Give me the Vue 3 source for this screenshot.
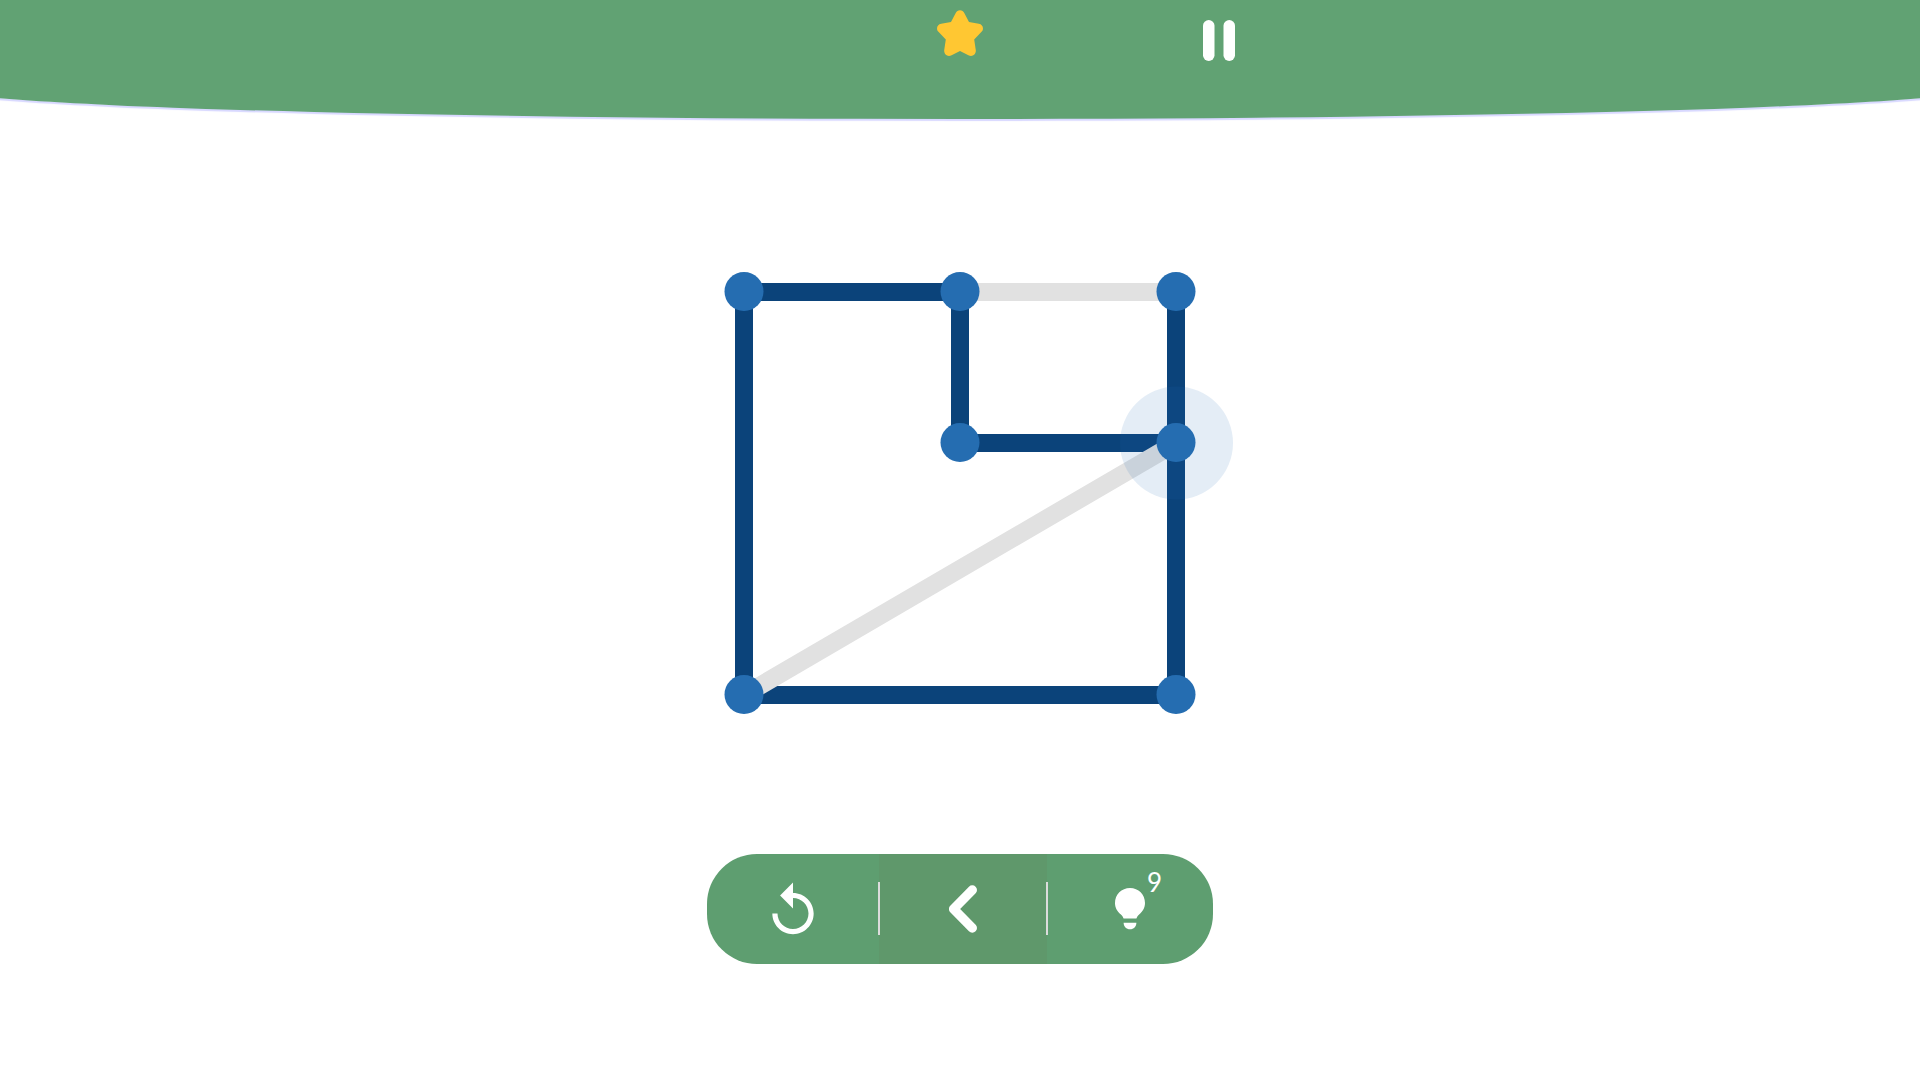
<script setup>
import { ref } from 'vue'

const hints = ref(9)

const xs = [72, 288, 504]
const ys = [40, 191, 443]

// Each edge joins two [column, row] grid positions, in painting order.
const edges = [
  { from: [0, 0], to: [1, 0], done: true },
  { from: [1, 0], to: [2, 0], done: false },
  { from: [1, 1], to: [2, 1], done: true },
  { from: [0, 2], to: [2, 2], done: true },
  { from: [0, 2], to: [2, 1], done: false },
  { from: [0, 0], to: [0, 2], done: true },
  { from: [1, 0], to: [1, 1], done: true },
  { from: [2, 0], to: [2, 2], done: true }
]

const nodes = [[0, 0], [1, 0], [2, 0], [1, 1], [2, 1], [0, 2], [2, 2]]
const current = [2, 1]
</script>

<template>
  <div class="game">
    <header class="header">
      <div class="header-inner">
        <svg class="star" viewBox="0 0 46 46" aria-hidden="true">
          <path d="M18.6 3.2 C20.2 -.9 25.8 -.9 27.4 3.2 L32 12 L41.8 13.8 C46 14.5 47.4 19.2 44.3 22 L37.2 29.4 L38.8 40.2 C39.2 44.6 35.2 47.3 31.4 45.3 L23 41 L14.6 45.3 C10.8 47.3 6.8 44.6 7.2 40.2 L8.8 29.4 L1.7 22 C-1.4 19.2 0 14.5 4.2 13.8 L14 12 Z" />
        </svg>
        <button class="pause" type="button" aria-label="Pause">
          <svg viewBox="0 0 32 41" aria-hidden="true">
            <rect x="0" y="0" width="11.5" height="41" rx="5.75" />
            <rect x="20.5" y="0" width="11.5" height="41" rx="5.75" />
          </svg>
        </button>
      </div>
    </header>

    <main class="stage">
      <svg class="board" viewBox="0 0 576 483" role="img" aria-label="One line puzzle">
        <line
          v-for="(edge, i) in edges"
          :key="i"
          :class="['edge', { done: edge.done }]"
          :x1="xs[edge.from[0]]"
          :y1="ys[edge.from[1]]"
          :x2="xs[edge.to[0]]"
          :y2="ys[edge.to[1]]"
        />
        <circle class="halo" :cx="xs[current[0]] + 0.5" :cy="ys[current[1]]" r="56.5" />
        <circle
          v-for="(node, i) in nodes"
          :key="i"
          class="node"
          :cx="xs[node[0]]"
          :cy="ys[node[1]] - 0.5"
          r="19.5"
        />
      </svg>

      <nav class="toolbar" aria-label="Game controls">
        <button class="tool restart" type="button" aria-label="Restart">
          <svg viewBox="0 0 24 24" aria-hidden="true">
            <path d="M12 5V1L7 6l5 5V7c3.31 0 6 2.69 6 6s-2.69 6-6 6-6-2.69-6-6H4c0 4.42 3.58 8 8 8s8-3.58 8-8-3.58-8-8-8z" />
          </svg>
        </button>
        <button class="tool undo" type="button" aria-label="Undo">
          <svg viewBox="0 0 28 48" aria-hidden="true">
            <path d="M23.3 5 L4.6 24 L23.3 43" />
          </svg>
        </button>
        <button class="tool hint" type="button" aria-label="Hint">
          <svg viewBox="0 0 30 42" aria-hidden="true">
            <path d="M15 0 C6.5 0 0 6.6 0 15 C0 20 2.4 23.4 5.6 26.3 C7.2 27.8 8 29 8.6 30.6 H21.4 C22 29 22.8 27.8 24.4 26.3 C27.6 23.4 30 20 30 15 C30 6.6 23.5 0 15 0 Z" />
            <path d="M8.6 34.7 H21.4 C21.2 38.6 18.8 41.2 15 41.2 C11.2 41.2 8.8 38.6 8.6 34.7 Z" />
          </svg>
          <span class="count">{{ hints }}</span>
        </button>
      </nav>
    </main>
  </div>
</template>

<style>
body {
  margin: 0;
  background: #fff;
}
</style>

<style scoped>
.game {
  min-height: 100vh;
  overflow: hidden;
  font-family: Lato, "Open Sans", sans-serif;
}

button {
  margin: 0;
  padding: 0;
  border: 0;
  background: none;
  font: inherit;
  color: #fff;
  cursor: pointer;
}

svg {
  display: block;
}

.header {
  position: relative;
  height: 119px;
}

.header::before {
  content: "";
  position: absolute;
  inset: 0 -3%;
  background: #61a273;
  border-radius: 0 0 50% 50% / 0 0 31px 31px;
  box-shadow: 0 2px 1px #d8d8ff;
}

.header-inner {
  position: relative;
  display: grid;
  grid-template-columns: 1fr auto 1fr;
  align-items: start;
  max-width: 550px;
  margin: 0 auto;
  padding-top: 10px;
}

.star {
  grid-column: 2;
  width: 46px;
  height: 46px;
  fill: #ffc732;
}

.pause {
  justify-self: end;
  padding-top: 10px;
}

.pause svg {
  width: 32px;
  height: 41px;
  fill: #fff;
}

.stage {
  display: flex;
  flex-direction: column;
  align-items: center;
  gap: 119px;
  padding-top: 133px;
}

.board {
  width: 100%;
  max-width: 576px;
}

.edge {
  stroke: #e1e1e1;
  stroke-width: 18px;
}

.edge.done {
  stroke: #0b437a;
}

.halo {
  fill: #2569b1;
  fill-opacity: 0.12;
}

.node {
  fill: #256db1;
}

.toolbar {
  display: grid;
  grid-template-columns: 172px 168px 166px;
  height: 110px;
  border-radius: 50px;
  overflow: hidden;
}

.tool {
  position: relative;
  display: flex;
  align-items: center;
  justify-content: center;
  background: #5e9e70;
}

.restart svg {
  width: 62px;
  height: 62px;
  margin-top: 4px;
  fill: #fff;
}

.undo {
  z-index: 1;
  background: #5f986b;
}

.undo::before,
.undo::after {
  content: "";
  position: absolute;
  top: 28px;
  width: 2px;
  height: 53px;
  background: #dcdcdc;
}

.undo::before {
  left: -1px;
}

.undo::after {
  right: -1px;
}

.undo svg {
  width: 28px;
  height: 48px;
  fill: none;
  stroke: #fff;
  stroke-width: 9.4px;
  stroke-linecap: round;
  stroke-linejoin: round;
}

.hint svg {
  width: 30px;
  height: 42px;
  fill: #fff;
}

.count {
  position: absolute;
  top: 12px;
  left: 100px;
  font-size: 26px;
  line-height: 32px;
}
</style>
